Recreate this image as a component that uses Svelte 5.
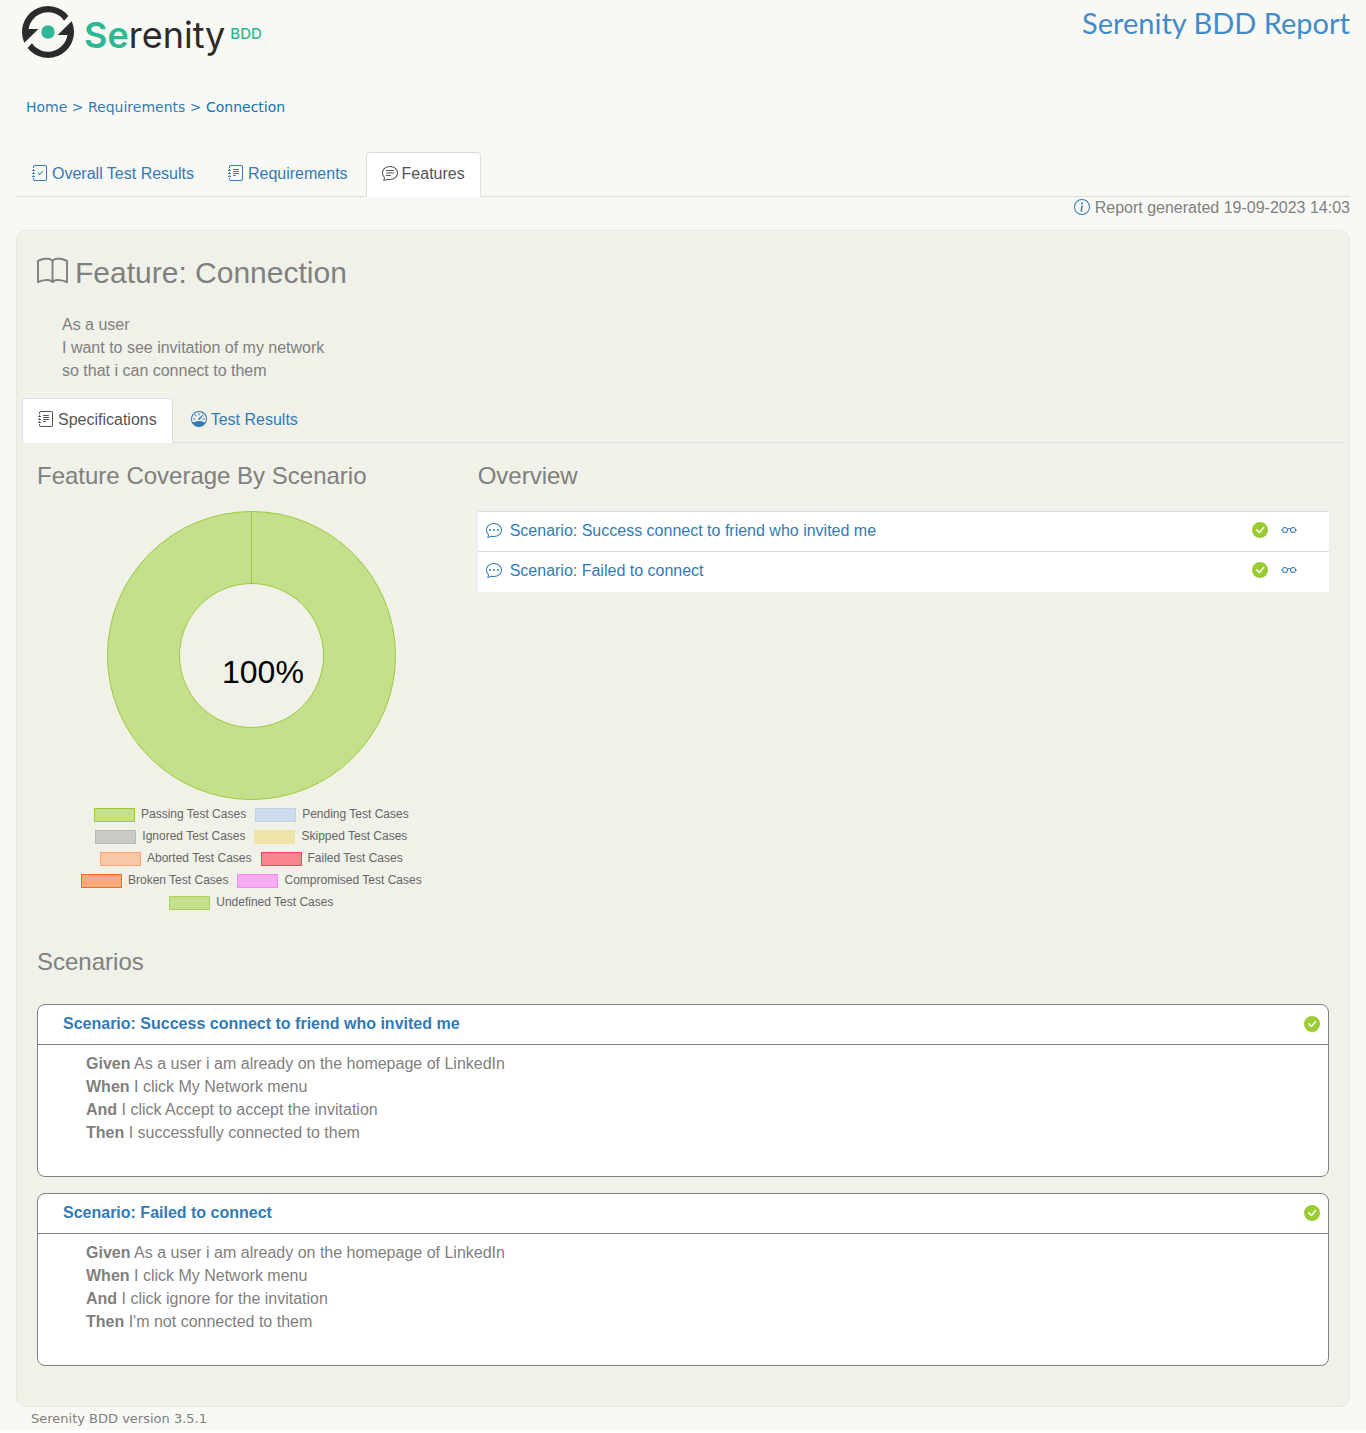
<script>
  const journal =
    'M3 0h10a2 2 0 0 1 2 2v12a2 2 0 0 1-2 2H3a2 2 0 0 1-2-2v-1h1v1a1 1 0 0 0 1 1h10a1 1 0 0 0 1-1V2a1 1 0 0 0-1-1H3a1 1 0 0 0-1 1v1H1V2a2 2 0 0 1 2-2zM1 5v-.5a.5.5 0 0 1 1 0V5h.5a.5.5 0 0 1 0 1h-2a.5.5 0 0 1 0-1H1zm0 3v-.5a.5.5 0 0 1 1 0V8h.5a.5.5 0 0 1 0 1h-2a.5.5 0 0 1 0-1H1zm0 3v-.5a.5.5 0 0 1 1 0v.5h.5a.5.5 0 0 1 0 1h-2a.5.5 0 0 1 0-1H1z';
  const chat =
    'M2.678 11.894a1 1 0 0 1 .287.801 10.97 10.97 0 0 1-.398 2c1.395-.323 2.247-.697 2.634-.893a1 1 0 0 1 .71-.074A8.06 8.06 0 0 0 8 14c3.996 0 7-2.807 7-6 0-3.192-3.004-6-7-6S1 4.808 1 8c0 1.468.617 2.83 1.678 3.894zm-.493 3.905a21.682 21.682 0 0 1-.713.129c-.2.032-.352-.176-.273-.362a9.68 9.68 0 0 0 .244-.637l.003-.01c.248-.72.45-1.548.524-2.319C.743 11.37 0 9.76 0 8c0-3.866 3.582-7 8-7s8 3.134 8 7-3.582 7-8 7a9.06 9.06 0 0 1-2.347-.306c-.52.263-1.639.742-3.468 1.105z';

  const icons = {
    journalCheck: [
      journal,
      'M10.854 6.146a.5.5 0 0 1 0 .708l-3 3a.5.5 0 0 1-.708 0l-1.5-1.5a.5.5 0 1 1 .708-.708L7.5 8.793l2.646-2.647a.5.5 0 0 1 .708 0z'
    ],
    journalText: [
      journal,
      'M5 10.5a.5.5 0 0 1 .5-.5h2a.5.5 0 0 1 0 1h-2a.5.5 0 0 1-.5-.5zm0-2a.5.5 0 0 1 .5-.5h5a.5.5 0 0 1 0 1h-5a.5.5 0 0 1-.5-.5zm0-2a.5.5 0 0 1 .5-.5h5a.5.5 0 0 1 0 1h-5a.5.5 0 0 1-.5-.5zm0-2a.5.5 0 0 1 .5-.5h5a.5.5 0 0 1 0 1h-5a.5.5 0 0 1-.5-.5z'
    ],
    chatText: [
      chat,
      'M4 5.5a.5.5 0 0 1 .5-.5h7a.5.5 0 0 1 0 1h-7a.5.5 0 0 1-.5-.5zM4 8a.5.5 0 0 1 .5-.5h7a.5.5 0 0 1 0 1h-7A.5.5 0 0 1 4 8zm0 2.5a.5.5 0 0 1 .5-.5h4a.5.5 0 0 1 0 1h-4a.5.5 0 0 1-.5-.5z'
    ],
    chatDots: [
      chat,
      'M5 8a1 1 0 1 1-2 0 1 1 0 0 1 2 0zm4 0a1 1 0 1 1-2 0 1 1 0 0 1 2 0zm3 1a1 1 0 1 0 0-2 1 1 0 0 0 0 2z'
    ],
    info: [
      'M8 15A7 7 0 1 1 8 1a7 7 0 0 1 0 14zm0 1A8 8 0 1 0 8 0a8 8 0 0 0 0 16z',
      'm8.93 6.588-2.29.287-.082.38.45.083c.294.07.352.176.288.469l-.738 3.468c-.194.897.105 1.319.808 1.319.545 0 1.178-.252 1.465-.598l.088-.416c-.2.176-.492.246-.686.246-.275 0-.375-.193-.304-.533L8.93 6.588zM9 4.5a1 1 0 1 1-2 0 1 1 0 0 1 2 0z'
    ],
    book: [
      'M1 2.828c.885-.37 2.154-.769 3.388-.893 1.33-.134 2.458.063 3.112.752v9.746c-.935-.53-2.12-.603-3.213-.493-1.18.12-2.37.461-3.287.811V2.828zm7.5-.141c.654-.689 1.782-.886 3.112-.752 1.234.124 2.503.523 3.388.893v9.923c-.918-.35-2.107-.692-3.287-.81-1.094-.111-2.278-.039-3.213.492V2.687zM8 1.783C7.015.936 5.587.81 4.287.94c-1.514.153-3.042.672-3.994 1.105A.5.5 0 0 0 0 2.5v11a.5.5 0 0 0 .707.455c.882-.4 2.303-.881 3.68-1.02 1.409-.142 2.59.087 3.223.877a.5.5 0 0 0 .78 0c.633-.79 1.814-1.019 3.222-.877 1.378.139 2.8.62 3.681 1.02A.5.5 0 0 0 16 13.5v-11a.5.5 0 0 0-.293-.455c-.952-.433-2.48-.952-3.994-1.105C10.413.809 8.985.936 8 1.783z'
    ],
    speedometer: [
      'M8 2a.5.5 0 0 1 .5.5V4a.5.5 0 0 1-1 0V2.5A.5.5 0 0 1 8 2zM3.732 3.732a.5.5 0 0 1 .707 0l.915.914a.5.5 0 1 1-.708.708l-.914-.915a.5.5 0 0 1 0-.707zM2 8a.5.5 0 0 1 .5-.5h1.586a.5.5 0 0 1 0 1H2.5A.5.5 0 0 1 2 8zm9.5 0a.5.5 0 0 1 .5-.5h1.5a.5.5 0 0 1 0 1H12a.5.5 0 0 1-.5-.5zm.754-4.246a.389.389 0 0 0-.527-.02L7.547 7.31A.91.91 0 1 0 8.85 8.569l3.434-4.297a.389.389 0 0 0-.029-.518z',
      'M6.664 15.889A8 8 0 1 1 9.336.11a8 8 0 0 1-2.672 15.78zm-4.665-4.283A11.945 11.945 0 0 1 8 10c2.186 0 4.236.585 6.001 1.606a7 7 0 1 0-12.002 0z'
    ],
    glasses: [
      'M4 6a2 2 0 1 1 0 4 2 2 0 0 1 0-4zm2.625.547a3 3 0 0 0-5.584.953H.5a.5.5 0 0 0 0 1h.541A3 3 0 0 0 7 8a1 1 0 0 1 2 0 3 3 0 0 0 5.959.5h.541a.5.5 0 0 0 0-1h-.541a3 3 0 0 0-5.584-.953A1.993 1.993 0 0 0 8 6c-.532 0-1.016.208-1.375.547zM14 8a2 2 0 1 1-4 0 2 2 0 0 1 4 0z'
    ],
    check: [
      'M16 8A8 8 0 1 1 0 8a8 8 0 0 1 16 0zm-3.97-3.03a.75.75 0 0 0-1.08.022L7.477 9.417 5.384 7.323a.75.75 0 0 0-1.06 1.06L6.97 11.03a.75.75 0 0 0 1.079-.02l3.992-4.99a.75.75 0 0 0-.01-1.05z'
    ]
  };

  const tabs = [
    { label: 'Overall Test Results', icon: 'journalCheck' },
    { label: 'Requirements', icon: 'journalText' },
    { label: 'Features', icon: 'chatText', active: true }
  ];

  let view = $state('Specifications');
  const views = [
    { label: 'Specifications', icon: 'journalText' },
    { label: 'Test Results', icon: 'speedometer' }
  ];

  const legend = [
    [['Passing', 'passing'], ['Pending', 'pending']],
    [['Ignored', 'ignored'], ['Skipped', 'skipped']],
    [['Aborted', 'aborted'], ['Failed', 'failed']],
    [['Broken', 'broken'], ['Compromised', 'compromised']],
    [['Undefined', 'undefined']]
  ];

  const scenarios = [
    {
      id: 'success',
      title: 'Scenario: Success connect to friend who invited me',
      steps: [
        ['Given', 'As a user i am already on the homepage of LinkedIn'],
        ['When', 'I click My Network menu'],
        ['And', 'I click Accept to accept the invitation'],
        ['Then', 'I successfully connected to them']
      ]
    },
    {
      id: 'failed',
      title: 'Scenario: Failed to connect',
      steps: [
        ['Given', 'As a user i am already on the homepage of LinkedIn'],
        ['When', 'I click My Network menu'],
        ['And', 'I click ignore for the invitation'],
        ['Then', "I'm not connected to them"]
      ]
    }
  ];
</script>

{#snippet icon(name)}
  <svg class="icon icon-{name}" viewBox="0 0 16 16" aria-hidden="true">
    {#each icons[name] as d}
      <path {d} fill-rule="evenodd" />
    {/each}
  </svg>
{/snippet}

<div class="page">
  <header>
    <a class="logo" href="#home" aria-label="Serenity BDD">
      <svg class="mark" viewBox="-78 -78 156 156" aria-hidden="true">
        <path d="M-71 32.3A78 78 0 0 1 61.3-48.2L48.2-34.1A59 59 0 0 0-58.3-9H-29Z" />
        <path d="M71-32.3A78 78 0 0 1-61.3 48.2L-48.2 34.1A59 59 0 0 0 58.3 9H29Z" />
        <circle r="20" />
      </svg>
      <span class="word"><b>Se</b>renity</span>
      <span class="bdd">BDD</span>
    </a>
    <span class="report-title">Serenity BDD Report</span>
  </header>

  <nav class="crumbs" aria-label="Breadcrumb">
    <a href="#home">Home</a> &gt; <a href="#requirements">Requirements</a> &gt; <span>Connection</span>
  </nav>

  <nav class="tabs" aria-label="Report sections">
    {#each tabs as tab}
      <a class="tab" class:active={tab.active} href="#{tab.icon}">{@render icon(tab.icon)}{tab.label}</a>
    {/each}
  </nav>

  <p class="generated"><span class="info">{@render icon('info')}</span>Report generated 19-09-2023 14:03</p>

  <main>
    <h2>{@render icon('book')}Feature: Connection</h2>
    <p class="narrative">As a user<br />I want to see invitation of my network<br />so that i can connect to them</p>

    <div class="tabs inner">
      {#each views as item}
        <button class="tab" class:active={view === item.label} onclick={() => (view = item.label)}>
          {@render icon(item.icon)}{item.label}
        </button>
      {/each}
    </div>

    <div class="columns">
      <section>
        <h3>Feature Coverage By Scenario</h3>
        <div class="chart">
          <svg class="donut" viewBox="0 0 289 289" role="img" aria-label="Coverage chart">
            <path
              class="ring"
              fill-rule="evenodd"
              d="M144.5.5a144 144 0 1 1 0 288a144 144 0 1 1 0-288zM144.5 72.5a72 72 0 1 0 0 144a72 72 0 1 0 0-144z"
            />
            <path class="seam" d="M144.5.5v72" />
            <text x="115" y="172">100%</text>
          </svg>
          <div class="legend">
            {#each legend as row}
              <div class="legend-row">
                {#each row as [name, kind]}
                  <span class="key"><i class="swatch {kind}"></i>{name} Test Cases</span>
                {/each}
              </div>
            {/each}
          </div>
        </div>
      </section>

      <section>
        <h3>Overview</h3>
        <table>
          <tbody>
            {#each scenarios as s}
              <tr>
                <td><a class="entry" href="#{s.id}">{@render icon('chatDots')}{s.title}</a></td>
                <td class="status">
                  <div class="marks">
                    {@render icon('check')}
                    <a href="#{s.id}-detail" aria-label="Details">{@render icon('glasses')}</a>
                  </div>
                </td>
              </tr>
            {/each}
          </tbody>
        </table>
      </section>
    </div>

    <section class="scenarios">
      <h3>Scenarios</h3>
      {#each scenarios as s}
        <article id={s.id}>
          <div class="head"><a href="#{s.id}-detail">{s.title}</a>{@render icon('check')}</div>
          <div class="steps">
            {#each s.steps as [word, text]}
              <div><b>{word}</b> {text}</div>
            {/each}
          </div>
        </article>
      {/each}
    </section>
  </main>

  <footer>Serenity BDD version 3.5.1</footer>
</div>

<style>
  :global(body) {
    background: #fff;
  }
  .page {
    padding: 0 16px;
    background: #f8f9f4;
    color: #808080;
    font: 16px/23px 'Liberation Sans', Arial, sans-serif;
  }
  .page :global(*) {
    box-sizing: border-box;
  }
  a {
    color: #337ab7;
    text-decoration: none;
  }
  h2,
  h3,
  p {
    margin: 0;
    font-weight: 400;
  }
  .icon {
    width: 16px;
    height: 16px;
    flex: none;
    fill: currentColor;
  }
  .icon-check {
    color: #9acd32;
  }

  header {
    display: flex;
    justify-content: space-between;
    align-items: flex-start;
    height: 96px;
    padding-top: 6px;
  }
  .logo {
    display: flex;
    align-items: flex-start;
    padding-left: 6px;
    font-family: Inter, sans-serif;
  }
  .mark {
    width: 52px;
    height: 52px;
    fill: #2b2b2b;
  }
  .mark circle {
    fill: #2db891;
  }
  .word {
    margin-left: 10px;
    font-size: 36px;
    line-height: 58px;
    color: #2b2b2b;
  }
  .word b {
    font-weight: 600;
    color: #2db891;
  }
  .bdd {
    margin-left: 5px;
    font-size: 15px;
    line-height: 56px;
    font-weight: 500;
    color: #2db891;
  }
  .report-title {
    color: #428bca;
    font: 29px/34px Lato, sans-serif;
  }

  .crumbs {
    height: 56px;
    padding-left: 10px;
    color: #337ab7;
    font: 14px/22px 'DejaVu Sans', Verdana, sans-serif;
  }
  .crumbs span {
    color: #0b76ad;
  }

  .tabs {
    display: flex;
    gap: 2px;
    height: 45px;
    border-bottom: 1px solid #ddd;
  }
  .tab {
    display: flex;
    align-items: center;
    gap: 4px;
    height: 45px;
    padding: 0 15px 3px;
    border: 1px solid transparent;
    border-radius: 4px 4px 0 0;
    background: none;
    color: #337ab7;
    font: inherit;
    cursor: pointer;
  }
  .tab.active {
    border-color: #ddd;
    border-bottom-color: #fff;
    background: #fff;
    color: #555;
  }
  .inner {
    margin-top: 16px;
  }

  .generated {
    display: flex;
    justify-content: flex-end;
    align-items: center;
    gap: 5px;
    height: 20px;
    margin-bottom: 13px;
  }
  .info {
    display: flex;
    color: #337ab7;
  }

  main {
    padding: 22px 5px 40px;
    border: 1px solid #e8e8e1;
    border-radius: 10px;
    background: #f0f1e8;
  }
  h2 {
    display: flex;
    align-items: center;
    gap: 7px;
    padding-left: 15px;
    font-size: 30px;
    line-height: 40px;
  }
  .icon-book {
    width: 31px;
    height: 31px;
    margin-bottom: 4px;
  }
  .narrative {
    padding: 20px 40px 0;
  }
  .columns {
    display: grid;
    grid-template-columns: 1fr 2fr;
  }
  .columns section,
  .scenarios {
    padding: 0 15px;
  }
  h3 {
    padding: 19px 0 21px;
    font-size: 24px;
    line-height: 28px;
  }
  .chart {
    display: flex;
    flex-direction: column;
    align-items: center;
    padding-left: 18px;
  }
  .donut {
    width: 289px;
    height: 289px;
  }
  .ring {
    fill: rgba(154, 205, 50, 0.5);
    stroke: #9acd32;
  }
  .seam {
    stroke: #9acd32;
  }
  .donut text {
    fill: #000;
    font-size: 32px;
  }
  .legend {
    padding-top: 3px;
    color: #666;
    font-size: 12px;
    line-height: 22px;
  }
  .legend-row {
    display: flex;
    justify-content: center;
    gap: 9px;
  }
  .key {
    display: flex;
    align-items: center;
    gap: 6px;
    white-space: nowrap;
  }
  .swatch {
    width: 41px;
    height: 14px;
    margin-top: 2px;
    border: 1px solid;
  }
  .passing {
    border-color: #9acd32;
    background: #c5df8d;
  }
  .pending {
    border-color: #bbd3ec;
    background: #ccdcea;
  }
  .ignored {
    border-color: #b8b9b5;
    background: #c8cac4;
  }
  .skipped {
    border-color: #eee3a3;
    background: #eee5ab;
  }
  .aborted {
    border-color: #ffa071;
    background: #f8c6a9;
  }
  .failed {
    border-color: #f64558;
    background: #f8868e;
  }
  .broken {
    border-color: #fb6a1c;
    background: #f9aa7a;
  }
  .compromised {
    border-color: #fd87f6;
    background: #f8adf1;
  }
  .undefined {
    border-color: #abd558;
    background: #c5df8d;
  }

  table {
    width: 100%;
    border-collapse: collapse;
    background: #fff;
  }
  td {
    height: 40px;
    padding: 0 8px 3px;
    border-top: 1px solid #ddd;
  }
  .entry,
  .marks {
    display: flex;
    align-items: center;
    gap: 8px;
  }
  .status {
    width: 85px;
  }
  .marks {
    gap: 13px;
  }
  .marks a {
    display: flex;
  }

  .scenarios {
    padding-top: 16px;
  }
  .scenarios h3 {
    padding-bottom: 28px;
  }
  article {
    margin-bottom: 16px;
    border: 1px solid #808080;
    border-radius: 8px;
    background: #fff;
  }
  article:last-child {
    margin-bottom: 0;
  }
  .head {
    display: flex;
    justify-content: space-between;
    align-items: center;
    height: 40px;
    padding: 0 8px 2px 25px;
    border-bottom: 1px solid #808080;
    font-weight: 700;
  }
  .steps {
    padding: 7px 48px 32px;
  }
  footer {
    padding: 0 15px;
    font: 13px/23px 'DejaVu Sans', Verdana, sans-serif;
  }
</style>
